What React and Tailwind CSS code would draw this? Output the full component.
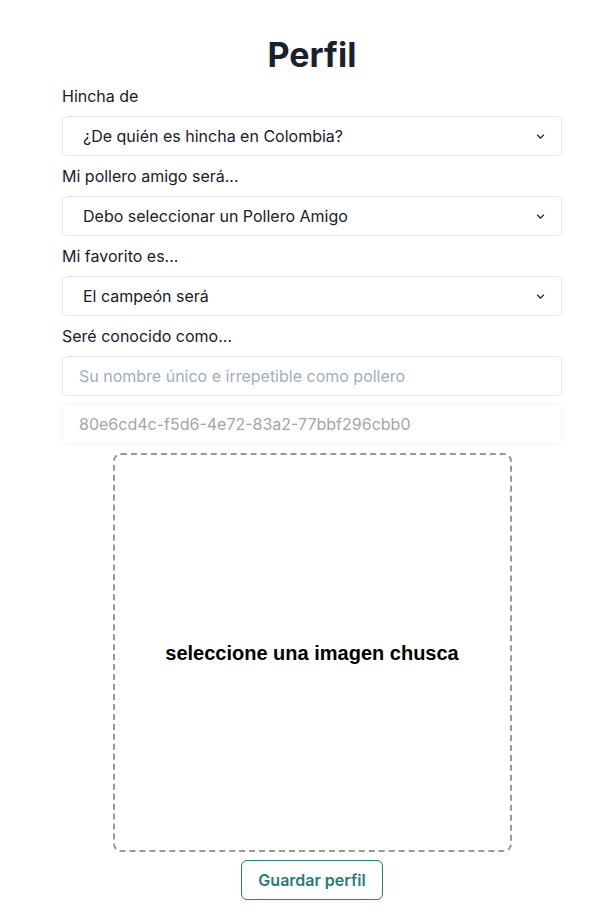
import React from 'react';

function Chevron() {
  return (
    <svg viewBox="0 0 24 24" className="w-[15px] h-[15px] text-[#1a202c]" aria-hidden="true">
      <path fill="currentColor" d="M16.59 8.59L12 13.17 7.41 8.59 6 10l6 6 6-6z" />
    </svg>
  );
}

function SelectBox({ text }) {
  return (
    <div className="h-10 w-full flex items-center justify-between rounded-md border border-[#e2e8f0] pl-5 pr-[13px] text-base text-[#1a202c]">
      <span>{text}</span>
      <Chevron />
    </div>
  );
}

function Label({ children }) {
  return <div className="h-6 mb-2 text-base font-normal leading-6 text-[#1a202c]">{children}</div>;
}

export default function App() {
  return (
    <div className="min-h-screen bg-white" style={{ fontFamily: 'Inter, "Noto Sans", sans-serif' }}>
      <div className="w-[500px] ml-[62px] pt-[35px] flex flex-col">
        <h1 className="h-10 mb-[9px] text-center text-[34px] font-bold leading-10 text-[#1a202c]">Perfil</h1>

        <Label>Hincha de</Label>
        <SelectBox text="¿De quién es hincha en Colombia?" />

        <div className="mt-2">
          <Label>Mi pollero amigo será...</Label>
        </div>
        <SelectBox text="Debo seleccionar un Pollero Amigo" />

        <div className="mt-2">
          <Label>Mi favorito es...</Label>
        </div>
        <SelectBox text="El campeón será" />

        <div className="mt-2">
          <Label>Seré conocido como...</Label>
        </div>
        <input
          className="h-10 w-full rounded-md border border-[#e2e8f0] px-4 text-base text-[#1a202c] placeholder:text-[#a0aec0] outline-none"
          placeholder="Su nombre único e irrepetible como pollero"
        />
        <input
          disabled
          className="mt-2 h-10 w-full rounded-md border border-[#f3f5f8] px-4 text-base text-[#a3a6ab] bg-white outline-none"
          value="80e6cd4c-f5d6-4e72-83a2-77bbf296cbb0"
          readOnly
        />

        <div className="mt-[9px] mx-auto w-[399px] h-[399px] rounded-lg border-2 border-dashed border-[#999999] flex items-center justify-center">
          <span className="text-[20px] font-bold text-black" style={{ fontFamily: '"Liberation Sans", Arial, sans-serif' }}>
            seleccione una imagen chusca
          </span>
        </div>

        <div className="mt-2 flex justify-center">
          <button className="h-10 px-4 rounded-md border border-[#2c7a7b] text-base font-semibold text-[#2c7a7b] bg-white">
            Guardar perfil
          </button>
        </div>
      </div>
    </div>
  );
}
